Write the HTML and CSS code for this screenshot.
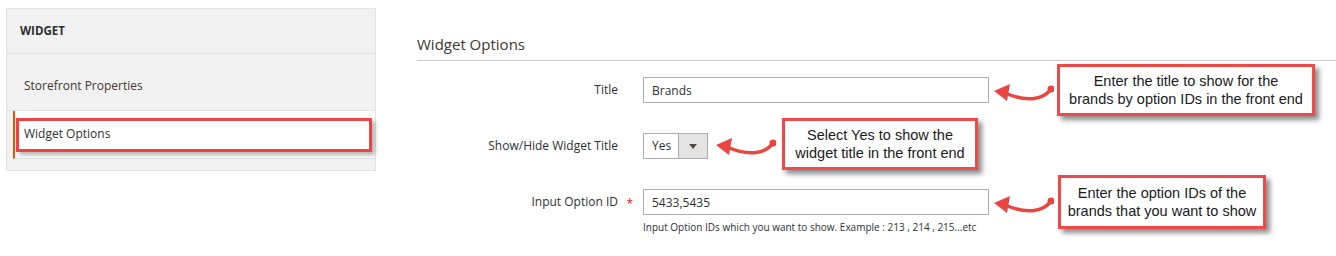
FILE: index.html
```html
<!DOCTYPE html>
<html>
<head>
    <title>Widget Options</title>
    <link rel="stylesheet" href="styles.css">
</head>
<body>
    <div class="page">
        <div class="tabs">
            <div class="tabs-title">Widget</div>
            <div class="tab-item">Storefront Properties</div>
            <div class="tab-item active">
                Widget Options
                <span class="highlight"></span>
            </div>
            <div class="tabs-bottom"></div>
        </div>

        <div class="main">
            <div class="legend">Widget Options</div>

            <div class="field">
                <label class="field-label">Title</label>
                <div class="field-control">
                    <input type="text" class="text-input" value="Brands">
                </div>
                <div class="note-wrap row-1">
                    <svg class="arrow" width="60" height="24" viewBox="0 0 60 24">
                        <path d="M57 11 C50 21, 34 25, 11 15" fill="none" stroke="#e8463e" stroke-width="3.5" stroke-linecap="round"/>
                        <polygon points="0,13 16,6 13,23" fill="#e8463e"/>
                        <circle cx="57" cy="11" r="3.5" fill="#e8463e"/>
                    </svg>
                    <div class="callout callout-1">Enter the title to show for the<br>brands by option IDs in the front end</div>
                </div>
            </div>

            <div class="field">
                <label class="field-label">Show/Hide Widget Title</label>
                <div class="field-control">
                    <div class="select">
                        <span class="select-value">Yes</span>
                        <span class="select-btn"><span class="caret"></span></span>
                    </div>
                </div>
                <div class="note-wrap row-2">
                    <svg class="arrow" width="60" height="24" viewBox="0 0 60 24">
                        <path d="M57 11 C50 21, 34 25, 11 15" fill="none" stroke="#e8463e" stroke-width="3.5" stroke-linecap="round"/>
                        <polygon points="0,13 16,6 13,23" fill="#e8463e"/>
                        <circle cx="57" cy="11" r="3.5" fill="#e8463e"/>
                    </svg>
                    <div class="callout callout-2">Select Yes to show the<br>widget title in the front end</div>
                </div>
            </div>

            <div class="field">
                <label class="field-label required">Input Option ID</label>
                <div class="field-control">
                    <input type="text" class="text-input" value="5433,5435">
                    <div class="field-note">Input Option IDs which you want to show. Example : 213 , 214 , 215...etc</div>
                </div>
                <div class="note-wrap row-3">
                    <svg class="arrow" width="60" height="24" viewBox="0 0 60 24">
                        <path d="M57 11 C50 21, 34 25, 11 15" fill="none" stroke="#e8463e" stroke-width="3.5" stroke-linecap="round"/>
                        <polygon points="0,13 16,6 13,23" fill="#e8463e"/>
                        <circle cx="57" cy="11" r="3.5" fill="#e8463e"/>
                    </svg>
                    <div class="callout callout-3">Enter the option IDs of the<br>brands that you want to show</div>
                </div>
            </div>
        </div>
    </div>
</body>
</html>
```

FILE: styles.css
```css
/* admin widget edit page */
body {
    margin: 0;
    background: #fff;
    font-family: "Open Sans", Arial, sans-serif;
    color: #303030;
}
.page {
    display: flex;
    align-items: flex-start;
}

/* left tabs */
.tabs {
    width: 368px;
    margin: 8px 0 0 6px;
    border: 1px solid #e3e3e3;
    background-color: #f1f1f1;
}
.tabs-title {
    height: 44px;
    line-height: 44px;
    padding-left: 13px;
    font-size: 11.5px;
    font-weight: 700;
    text-transform: uppercase;
    color: #303030;
    border-bottom: 1px solid #e0e0e0;
}
.tab-item {
    height: 48px;
    line-height: 48px;
    padding-top: 8px;
    padding-left: 17px;
    font-size: 12px;
    color: #41362f;
    border-bottom: 1px solid #e3e3e3;
}
.tab-item.active {
    position: relative;
    height: 47px;
    line-height: 45px;
    padding-top: 0;
    margin-left: 6px;
    padding-left: 9px;
    background-color: #fff;
    border-left: 2px solid #eb5202;
    color: #303030;
}
.highlight {
    position: absolute;
    left: 1px;
    top: 7px;
    width: 350px;
    height: 28px;
    border: 3px solid #f04346;
    box-shadow: 3px 3px 4px rgba(0, 0, 0, 0.3);
}
.tabs-bottom {
    height: 11px;
}

/* main form */
.main {
    flex: 1;
    margin-left: 41px;
    padding-top: 34px;
}
.legend {
    font-size: 15px;
    line-height: 20px;
    color: #41362f;
    padding-bottom: 6px;
    border-bottom: 1px solid #cccccc;
    margin-bottom: 16px;
}
.field {
    display: flex;
    align-items: flex-start;
    margin-bottom: 30px;
}
.field-label {
    position: relative;
    width: 201px;
    padding-right: 25px;
    text-align: right;
    font-size: 12px;
    line-height: 26px;
    color: #303030;
}
.field-label.required::after {
    content: "*";
    position: absolute;
    right: 10px;
    top: 2px;
    color: #e22626;
    font-size: 12px;
}
.text-input {
    display: block;
    box-sizing: border-box;
    width: 346px;
    height: 26px;
    margin: 0;
    padding: 0 8px;
    border: 1px solid #adadad;
    font-family: "Open Sans", Arial, sans-serif;
    font-size: 12px;
    color: #303030;
}
.field-note {
    margin-top: 5px;
    font-size: 10px;
    color: #303030;
}
.select {
    display: flex;
    box-sizing: border-box;
    width: 65px;
    height: 26px;
    border: 1px solid #adadad;
}
.select-value {
    flex: 1;
    padding-left: 8px;
    font-size: 12px;
    line-height: 24px;
}
.select-btn {
    width: 28px;
    display: flex;
    align-items: center;
    justify-content: center;
    background-color: #e3e3e3;
    border-left: 1px solid #adadad;
}
.caret {
    width: 0;
    height: 0;
    border-left: 4px solid transparent;
    border-right: 4px solid transparent;
    border-top: 5px solid #514943;
}

/* annotations */
.note-wrap {
    display: flex;
    align-items: center;
    height: 26px;
}
.arrow {
    flex: none;
    margin-left: 5px;
    margin-right: 3px;
}
.row-2 .arrow {
    margin-left: 8px;
    margin-right: 6px;
}
.row-2 {
    margin-top: -2px;
}
.row-3 .arrow {
    margin-right: 4px;
}
.callout {
    box-sizing: border-box;
    flex: none;
    height: 52px;
    border: 3px solid #ee4a4a;
    background-color: #fff;
    box-shadow: 4px 4px 5px rgba(0, 0, 0, 0.45);
    font-family: "Liberation Sans", Arial, sans-serif;
    font-size: 14.5px;
    line-height: 18px;
    color: #1a1a1a;
    text-align: center;
    padding-top: 5px;
}
.callout-1 {
    width: 258px;
}
.callout-2 {
    width: 196px;
}
.callout-3 {
    width: 208px;
    height: 54px;
    padding-top: 6px;
}
```
